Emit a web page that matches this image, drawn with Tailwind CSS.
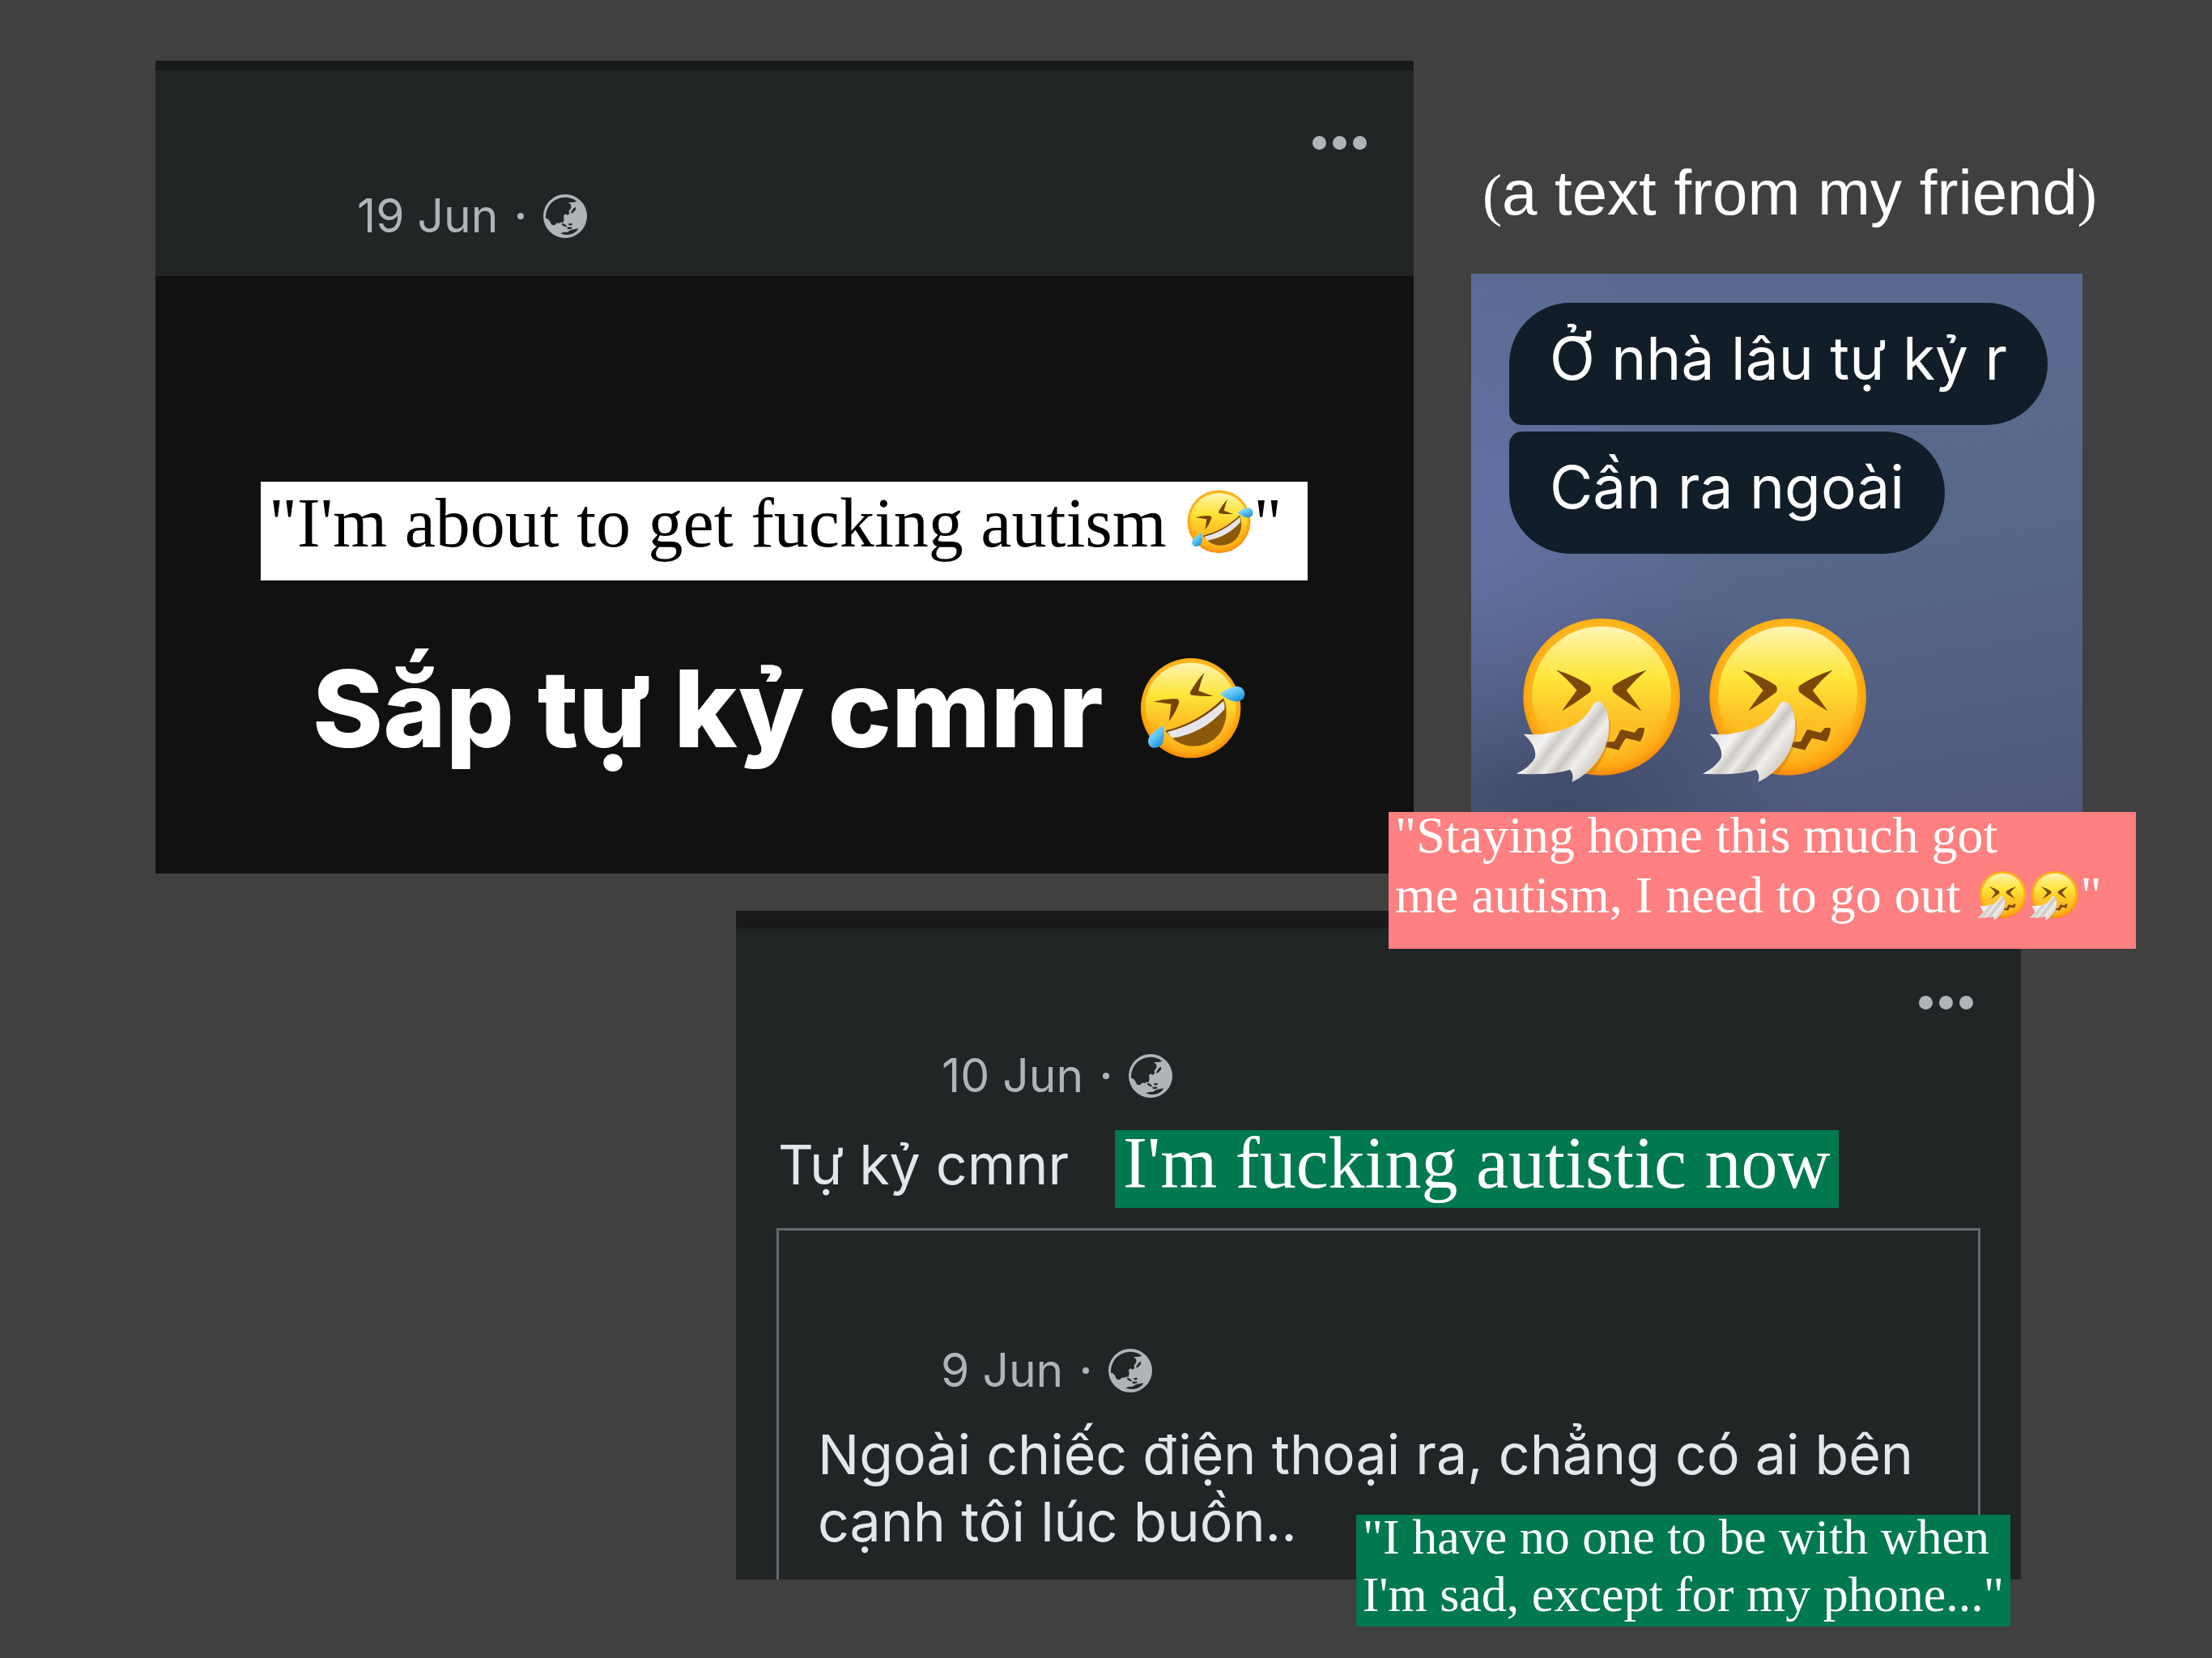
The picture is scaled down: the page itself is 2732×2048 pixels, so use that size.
<!DOCTYPE html>
<html lang="en">
<head>
  <meta charset="UTF-8" />
  <meta name="viewport" content="width=device-width, initial-scale=1.0"/>
  <title>Posts</title>
  <script src="https://cdn.jsdelivr.net/npm/@tailwindcss/browser@4"></script>
</head>
<body class="bg-[#404040] min-h-screen text-white font-['Inter','Liberation_Sans',sans-serif]">

  <!-- shared drawings -->
  <svg width="0" height="0" class="absolute" aria-hidden="true">
    <defs>
      <radialGradient id="edge" cx="0.5" cy="0.46" r="0.55">
        <stop offset="0.7" stop-color="#fdc026"/>
        <stop offset="0.88" stop-color="#fda912"/>
        <stop offset="1" stop-color="#f38308"/>
      </radialGradient>
      <linearGradient id="face" x1="0" y1="0" x2="0" y2="1">
        <stop offset="0" stop-color="#fff5b8"/>
        <stop offset="0.18" stop-color="#feec76"/>
        <stop offset="0.38" stop-color="#fee638"/>
        <stop offset="0.6" stop-color="#fdcb2b" stop-opacity="0.9"/>
        <stop offset="0.85" stop-color="#fcb31c" stop-opacity="0"/>
      </linearGradient>
      <linearGradient id="tissue" x1="0.25" y1="0.3" x2="0.85" y2="0.7">
        <stop offset="0" stop-color="#e6e5e3"/>
        <stop offset="0.2" stop-color="#f5f4f3"/>
        <stop offset="0.36" stop-color="#cfccc8"/>
        <stop offset="0.5" stop-color="#ecebe9"/>
        <stop offset="0.64" stop-color="#cbc6c0"/>
        <stop offset="0.8" stop-color="#f1efed"/>
        <stop offset="1" stop-color="#d9d4ce"/>
      </linearGradient>
      <linearGradient id="tear" x1="0" y1="0" x2="0.7" y2="1">
        <stop offset="0" stop-color="#b4e8fd"/>
        <stop offset="0.55" stop-color="#5cc4f8"/>
        <stop offset="1" stop-color="#1e8fd8"/>
      </linearGradient>
    </defs>

    <symbol id="globe" viewBox="90 62 160 160">
      <circle cx="170" cy="142" r="80" fill="#b0b3b8"/>
      <g fill="#222526">
        <path d="M99 150A71 71 0 0 1 212 87L204 91L181 92Q196 99 191 113L183 124L186 133L178 138L172 134L164 140L166 152L163 165L155 164L150 168L140 167L131 175L120 173L113 159L105 151Z"/>
        <path d="M208 108L209 118L197 131L190 130L199 115Z"/>
        <path d="M157 168L166 170L177 178L172 181L161 177Z"/>
        <path d="M181 170L194 168L197 173L186 177Z"/>
        <path d="M176 183L194 182L195 188L180 190Z"/>
        <path d="M153 205Q164 200 178 201Q186 194 198 191L218 187Q214 199 195 207Q172 214 153 205Z"/>
      </g>
    </symbol>

    <symbol id="rofl" viewBox="92 70 390 372">
      <circle cx="280" cy="255" r="185" fill="url(#edge)"/>
      <ellipse cx="280" cy="245" rx="168" ry="158" fill="url(#face)"/>
      <g fill="#764504">
        <path d="M330 123Q316 160 309 191Q335 201 364 211Q320 212 284 207Q274 204 280 192Q299 158 330 123Z"/>
        <path d="M142 231Q185 218 228 221Q239 224 236 237Q222 275 199 304Q205 268 207 240Q175 235 142 231Z"/>
      </g>
      <path d="M188 341Q310 311 402 220Q426 280 392 342Q355 396 285 396Q230 395 188 341Z" fill="#8a5a0a"/>
      <path d="M194 343Q310 315 401 229Q407 243 405 259Q325 350 211 366Q202 357 194 343Z" fill="#e6e6ea"/>
      <path d="M188 341Q310 311 402 220" fill="none" stroke="#6d3c04" stroke-width="5"/>
      <path d="M389 202Q420 175 455 174Q480 180 480 204Q478 230 447 231Q418 228 389 202Z" fill="url(#tear)"/>
      <path d="M178 320Q187 352 174 388Q156 409 132 399Q114 383 128 358Q148 336 178 320Z" fill="url(#tear)"/>
    </symbol>

    <symbol id="sneeze" viewBox="70 66 610 610">
      <circle cx="386" cy="357" r="291" fill="url(#edge)"/>
      <ellipse cx="386" cy="350" rx="258" ry="255" fill="url(#face)"/>
      <g fill="#7c4807">
        <path d="M217 257Q290 280 340 314Q352 325 342 340Q295 376 239 409Q270 365 294 333Q260 292 217 257Z"/>
        <path d="M553 257Q482 280 431 314Q420 325 430 340Q477 376 534 409Q502 365 478 333Q512 292 553 257Z"/>
        <path d="M400 524L434 523L456 480Q460 477 468 480L508 490L522 473Q535 468 545 474Q543 500 529 523L476 510Q464 526 450 554L400 543Z"/>
      </g>
      <path d="M352 640Q420 560 420 460Q408 400 385 380L330 640Z" fill="#b96b06" opacity="0.35"/>
      <path d="M372 374Q402 376 412 440Q422 520 372 592Q330 650 276 673Q284 640 268 627Q200 650 70 642Q120 618 139 582Q146 540 96 495Q200 504 290 458Q330 430 352 390Q360 374 372 374Z" fill="url(#tissue)"/>
    </symbol>
  </svg>

  <main class="pt-[75px]">
    <div class="grid grid-cols-[minmax(0,1554fr)_minmax(0,755fr)] gap-x-[71px] pl-[192px] pr-[160px]">

      <!-- first post -->
      <article class="bg-[#111111]">
        <header class="bg-[#222526] border-t-[12px] border-[#18191b] pt-[81px] pb-[46px]">
          <button type="button" aria-label="More" class="flex gap-2 ml-auto mr-[58px]">
            <span class="size-[17px] rounded-full bg-[#b0b3b8]"></span>
            <span class="size-[17px] rounded-full bg-[#b0b3b8]"></span>
            <span class="size-[17px] rounded-full bg-[#b0b3b8]"></span>
          </button>
          <div class="flex items-center mt-[54px] pl-[249px] text-[57px] leading-[56px] text-[#b0b3b8]">
            <time>19 Jun</time>
            <span class="size-2 rounded-full bg-[#b0b3b8] ml-6 mr-6"></span>
            <svg class="size-[54px]" role="img" aria-label="Public"><use href="#globe"/></svg>
          </div>
        </header>
        <div class="pt-[254px] pb-[124px]">
          <p class="flex ml-[130px] mr-[131px] pl-[10px] pb-5 bg-white text-black font-['Liberation_Serif',serif] text-[86px] leading-[102px] whitespace-pre">"I'm about to get fucking autism <svg class="w-[82px] h-[79px] ml-1 mt-[10px]" role="img" aria-label="rolling on the floor laughing"><use href="#rofl"/></svg>"</p>
          <h2 class="flex mt-[78px] pl-[194px] font-extrabold text-[132px] leading-[160px] whitespace-pre">Sắp tự kỷ cmnr <svg class="w-[130px] h-[124px] ml-4 mt-[18px]" role="img" aria-label="rolling on the floor laughing"><use href="#rofl"/></svg></h2>
        </div>
      </article>

      <!-- chat -->
      <section class="relative pt-[118px]">
        <h2 class="ml-[14px] font-['Liberation_Sans',sans-serif] text-[78px] leading-[90px] whitespace-nowrap"><span class="font-['Liberation_Serif',serif] text-[72px]">(</span>a text from my friend<span class="font-['Liberation_Serif',serif] text-[72px]">)</span></h2>
        <div class="mt-[52px] pt-[36px] pb-[37px] pl-[47px] bg-[radial-gradient(circle_at_0%_45%,#6470a5_0%,transparent_40%),radial-gradient(circle_at_15%_100%,#404b6a_0%,transparent_35%),linear-gradient(170deg,#596b93_0%,#56688a_50%,#50587d_100%)]">
          <div class="flex flex-col items-start gap-2 text-[73px] leading-[138px]">
            <p class="px-[50px] pb-[13px] rounded-[76px] rounded-bl-[16px] bg-[#111e29] whitespace-nowrap">Ở nhà lâu tự kỷ r</p>
            <p class="px-[50px] pb-[13px] rounded-[76px] rounded-tl-[16px] bg-[#111e29] whitespace-nowrap">Cần ra ngoài</p>
          </div>
          <div class="flex gap-[27px] mt-[80px] pl-[9px]">
            <svg class="size-[203px]" role="img" aria-label="sneezing face"><use href="#sneeze"/></svg>
            <svg class="size-[203px]" role="img" aria-label="sneezing face"><use href="#sneeze"/></svg>
          </div>
        </div>
        <div class="absolute z-10 top-[928px] -left-[102px] -right-[66px] flex flex-col pl-[8px] pb-[29px] bg-[#ff8080] font-['Liberation_Serif',serif] text-[64px] leading-[74px] whitespace-pre">
          <p class="-mt-2">"Staying home this much got</p>
          <p class="flex items-center">me autism, I need to go out <svg class="size-[61px] ml-1 mr-[3px]" role="img" aria-label="sneezing face"><use href="#sneeze"/></svg><svg class="size-[61px] mr-[3px]" role="img" aria-label="sneezing face"><use href="#sneeze"/></svg>"</p>
        </div>
      </section>
    </div>

    <!-- second post -->
    <article class="relative mt-[46px] ml-[909px] mr-[236px] bg-[#222526] border-t-[22px] border-[#18191b] pt-[83px]">
      <button type="button" aria-label="More" class="flex gap-2 ml-auto mr-[59px]">
        <span class="size-[17px] rounded-full bg-[#b0b3b8]"></span>
        <span class="size-[17px] rounded-full bg-[#b0b3b8]"></span>
        <span class="size-[17px] rounded-full bg-[#b0b3b8]"></span>
      </button>
      <div class="flex items-center mt-[54px] pl-[254px] text-[57px] leading-[56px] text-[#b0b3b8]">
        <time>10 Jun</time>
        <span class="size-2 rounded-full bg-[#b0b3b8] ml-6 mr-6"></span>
        <svg class="size-[54px]" role="img" aria-label="Public"><use href="#globe"/></svg>
      </div>
      <div class="flex items-start mt-[39px] pl-[52px] whitespace-nowrap">
        <p class="text-[68px] leading-[84px] text-[#e4e6eb]">Tự kỷ cmnr</p>
        <p class="ml-[57px] px-[10px] pb-[14px] bg-[#007852] font-['Liberation_Serif',serif] text-[90px] leading-[82px]">I'm fucking autistic now</p>
      </div>
      <blockquote class="mt-[25px] mx-[50px] border-[3px] border-b-0 border-[#66696b] pt-[145px] pb-[30px]">
        <div class="flex items-center pl-[200px] text-[57px] leading-[56px] text-[#b0b3b8]">
          <time>9 Jun</time>
          <span class="size-2 rounded-full bg-[#b0b3b8] ml-6 mr-6"></span>
          <svg class="size-[54px]" role="img" aria-label="Public"><use href="#globe"/></svg>
        </div>
        <p class="mt-[34px] pl-[48px] text-[68px] leading-[83px] text-[#e4e6eb] whitespace-nowrap">Ngoài chiếc điện thoại ra, chẳng có ai bên<br>cạnh tôi lúc buồn..</p>
      </blockquote>
      <div class="absolute -bottom-[58px] right-[13px] flex flex-col px-[8px] pb-1 bg-[#007852] font-['Liberation_Serif',serif] text-[62px] leading-[71px] whitespace-nowrap">
        <p class="-mt-2">"I have no one to be with when</p>
        <p>I'm sad, except for my phone..."</p>
      </div>
    </article>
  </main>
</body>
</html>
